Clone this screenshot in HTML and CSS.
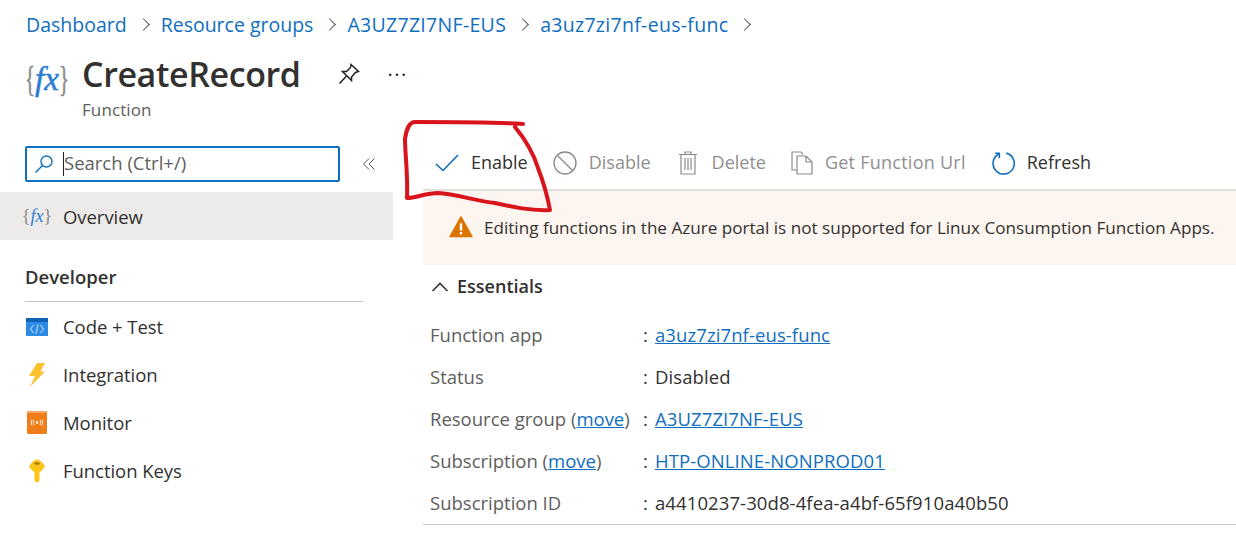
FILE: index.html
```html
<!DOCTYPE html>
<html lang="en">
<head>
  <meta charset="UTF-8" />
  <title>CreateRecord - Function</title>
  <link rel="stylesheet" href="styles.css">
</head>
<body>
  <nav class="crumbs">
    <a>Dashboard</a><span class="chev"></span>
    <a>Resource groups</a><span class="chev"></span>
    <a class="crumb-id">A3UZ7ZI7NF-EUS</a><span class="chev"></span>
    <a class="crumb-id">a3uz7zi7nf-eus-func</a><span class="chev"></span>
  </nav>

  <header class="head">
    <div class="fx fx-big"><span class="brace">{</span><span class="fx-text">fx</span><span class="brace">}</span></div>
    <div class="head-text">
      <div class="head-row">
        <h1>CreateRecord</h1>
        <svg class="pin" width="24" height="24" viewBox="0 0 24 24" fill="none" stroke="#222" stroke-width="1.5">
          <path d="M14 2.5 21.5 9.5 18.5 10.5 14.5 15 14.5 18.5 5.5 9.5 9.5 9.5 13.5 5.5Z"/>
          <path d="M9.5 14 2.5 21.5"/>
        </svg>
        <span class="dots">···</span>
      </div>
      <div class="subtitle">Function</div>
    </div>
  </header>

  <div class="columns">
    <aside class="side">
      <div class="search-row">
        <div class="search">
          <svg width="20" height="20" viewBox="0 0 20 20" fill="none" stroke="#106ebe" stroke-width="1.4">
            <circle cx="12.5" cy="7.5" r="5.5"/><path d="M8.5 11.5 1.5 18.5"/>
          </svg>
          <span class="caret"></span>
          <span class="placeholder">Search (Ctrl+/)</span>
        </div>
        <svg class="collapse" width="14" height="14" viewBox="0 0 14 14" fill="none" stroke="#555" stroke-width="1">
          <path d="M7 1.5 1.5 7 7 12.5M12.5 1.5 7 7 12.5 12.5"/>
        </svg>
      </div>

      <div class="menu-item active">
        <div class="fx fx-small"><span class="brace">{</span><span class="fx-text">fx</span><span class="brace">}</span></div>
        <span>Overview</span>
      </div>

      <div class="section">Developer</div>

      <div class="menu-item">
        <svg width="24" height="24" viewBox="0 0 24 24">
          <rect x="1" y="3" width="22" height="18" fill="#2f8ae6"/>
          <rect x="1" y="3" width="22" height="4" fill="#0f62b5"/>
          <path d="M8.500 10 5.500 14 8.500 18M15.500 10 18.500 14 15.500 18M13 9.500 11 18.500" fill="none" stroke="#d6eafc" stroke-width="1"/>
        </svg>
        <span>Code + Test</span>
      </div>
      <div class="menu-item">
        <svg width="24" height="24" viewBox="0 0 24 24">
          <path d="M12 0H20L15.500 8.500H20L5 24 10 13H4Z" fill="#fbc02d"/>
        </svg>
        <span>Integration</span>
      </div>
      <div class="menu-item">
        <svg width="24" height="24" viewBox="0 0 24 24">
          <rect x="2" y="0" width="20" height="23" rx="1.500" fill="#ef7d1a"/>
          <rect x="2" y="0" width="20" height="2" fill="#f6a766"/>
          <circle cx="12" cy="11.500" r="1.200" fill="#fff"/>
          <path d="M9 9Q7.500 11.500 9 14M15 9Q16.500 11.500 15 14M7 8.500Q5.500 11.500 7 14.500M17 8.500Q18.500 11.500 17 14.500" fill="none" stroke="#fff" stroke-width=".9"/>
        </svg>
        <span>Monitor</span>
      </div>
      <div class="menu-item">
        <svg width="24" height="24" viewBox="0 0 24 24">
          <path d="M12 0 17 3 20 7.500 17 11.500 14.500 13V21.500L12 24 9.500 21.500V13L7 11.500 4 7.500 7 3Z" fill="#fcc419"/>
          <ellipse cx="12" cy="4.500" rx="3" ry="1.300" fill="#a67c08"/>
        </svg>
        <span>Function Keys</span>
      </div>
    </aside>

    <main class="content">
      <div class="toolbar">
        <div class="tool">
          <svg width="24" height="24" viewBox="0 0 24 24" fill="none" stroke="#106ebe" stroke-width="1.600"><path d="M1 13 8 19.500 23 4"/></svg>
          <span>Enable</span>
        </div>
        <div class="tool off">
          <svg width="24" height="24" viewBox="0 0 24 24" fill="none" stroke="#8a8a8a" stroke-width="1.300"><circle cx="12" cy="12" r="11"/><path d="M4.500 4.500 19.500 19.500"/></svg>
          <span>Disable</span>
        </div>
        <div class="tool off">
          <svg width="24" height="24" viewBox="-2 0 24 24" fill="none" stroke="#8a8a8a" stroke-width="1.200"><path d="M1 3.500H19M7 3.500V1H13V3.500M3 3.500V23H17V3.500M7 7V19M10 7V19M13 7V19"/></svg>
          <span>Delete</span>
        </div>
        <div class="tool off tool-url">
          <svg width="22" height="24" viewBox="0 0 22 24" fill="none" stroke="#8a8a8a" stroke-width="1.200"><path d="M6 19H1V1H10L12 3.500M6 5H15L21 11V23H6ZM15 5V11H21"/></svg>
          <span>Get Function Url</span>
        </div>
        <div class="tool">
          <svg width="24" height="24" viewBox="0 0 26 26" fill="none" stroke="#106ebe" stroke-width="1.700"><path d="M8.500 3.200A11.500 11.500 0 1 0 16.500 2.300"/><path d="M4.500 2.500H9V7.500"/></svg>
          <span>Refresh</span>
        </div>
      </div>

      <div class="banner">
        <svg width="24" height="22" viewBox="0 0 26 24">
          <path d="M13 1 25 22.500H1Z" fill="#db7500" stroke="#db7500" stroke-width="1.500" stroke-linejoin="round"/>
          <rect x="11.700" y="8" width="2.600" height="8" fill="#fff"/>
          <rect x="11.700" y="17.500" width="2.600" height="2.600" fill="#fff"/>
        </svg>
        <span>Editing functions in the Azure portal is not supported for Linux Consumption Function Apps.</span>
      </div>

      <div class="essentials">
        <svg width="18" height="12" viewBox="0 0 18 12" fill="none" stroke="#333" stroke-width="1.600"><path d="M1.500 10 9 2.500 16.500 10"/></svg>
        <span>Essentials</span>
      </div>

      <dl class="props">
        <div class="prop"><dt>Function app</dt><dd><a class="link">a3uz7zi7nf-eus-func</a></dd></div>
        <div class="prop"><dt>Status</dt><dd>Disabled</dd></div>
        <div class="prop"><dt>Resource group (<a class="link">move</a>)</dt><dd><a class="link">A3UZ7ZI7NF-EUS</a></dd></div>
        <div class="prop"><dt>Subscription (<a class="link">move</a>)</dt><dd><a class="link">HTP-ONLINE-NONPROD01</a></dd></div>
        <div class="prop"><dt>Subscription ID</dt><dd>a4410237-30d8-4fea-a4bf-65f910a40b50</dd></div>
      </dl>
    </main>
  </div>

  <!-- red marker scribble drawn over the page -->
  <svg class="scribble" width="160" height="105" viewBox="0 0 160 105" fill="none" stroke="#d9141c" stroke-width="4" stroke-linecap="round" stroke-linejoin="round">
    <path d="M122 5C90 3 40 3 14 3 8 3 5 12 4 20 4 35 7 55 6 79 15 79 25 74 37 74 55 75 75 82 94 84 112 88 130 92 149 91 146 75 142 62 137 49 132 33 124 20 114 8"/>
  </svg>
</body>
</html>
```

FILE: styles.css
```css
body {
  font-family: "Open Sans", "Noto Sans", sans-serif;
  font-size: 18.5px;
  color: #323130;
  background: #fff;
  margin: 0;
  width: 1236px;
  height: 538px;
  overflow: hidden;
  position: relative;
}

a {
  color: #106ebe;
}

.crumbs {
  display: flex;
  align-items: center;
  height: 24px;
  padding: 12px 0 1px 26px;
  font-size: 19.5px;
}

.crumb-id {
  letter-spacing: 0.3px;
}

.chev {
  width: 8px;
  height: 8px;
  margin: 0 13px 0 12px;
  border-top: 1.5px solid #555;
  border-right: 1.5px solid #555;
  transform: rotate(45deg);
}

.head {
  display: flex;
  gap: 15px;
  padding: 17px 0 0 25px;
  height: 84px;
}

.fx {
  display: flex;
  align-items: center;
  font-family: "Liberation Serif", serif;
}

.brace {
  color: #8a8886;
  font-weight: normal;
}

.fx-text {
  color: #2b7cd3;
  font-style: italic;
}

.fx-big {
  width: 42px;
  font-size: 36px;
  height: 46px;
  margin-top: 2px;
}

.fx-big .brace {
  display: inline-block;
  width: 10px;
  transform: scaleX(.58);
  transform-origin: left center;
  -webkit-text-stroke: 0.5px #8a8886;
}

.fx-big .fx-text {
  font-size: 33px;
  -webkit-text-stroke: 0.5px #2b7cd3;
}

.fx-small {
  font-size: 18px;
  width: 24px;
  justify-content: center;
}

.head-row {
  display: flex;
  align-items: center;
}

h1 {
  margin: 0;
  font-size: 34px;
  line-height: 40px;
  font-weight: 600;
  letter-spacing: -0.4px;
}

.pin {
  margin-left: 36px;
}

.dots {
  margin-left: 27px;
  font-size: 20px;
  color: #222;
  letter-spacing: 1.5px;
}

.subtitle {
  margin-top: 4px;
  font-size: 17px;
  color: #605e5c;
  letter-spacing: 0.1px;
}

.columns {
  display: flex;
}

.side {
  width: 393px;
  margin-right: 30px;
  flex: none;
  padding-top: 8px;
}

.search-row {
  display: flex;
  align-items: center;
  padding-left: 25px;
  margin-bottom: 10px;
}

.search {
  box-sizing: border-box;
  width: 315px;
  height: 36px;
  border: 2px solid #106ebe;
  border-radius: 2px;
  display: flex;
  align-items: center;
  padding-left: 7px;
}

.caret {
  width: 1px;
  height: 24px;
  background: #222;
  margin-left: 9px;
}

.placeholder {
  color: #605e5c;
  margin-top: -3px;
}

.collapse {
  margin-left: 22px;
}

.menu-item {
  display: flex;
  align-items: center;
  gap: 14px;
  height: 48px;
  padding-left: 25px;
}

.menu-item > span {
  margin-top: -2px;
  letter-spacing: -0.05px;
}

.menu-item.active > span {
  margin-top: 0;
}

.menu-item.active {
  background: #edebe9;
  margin-bottom: 14px;
}

.section {
  width: 338px;
  margin-left: 25px;
  height: 48px;
  box-sizing: border-box;
  padding-top: 10px;
  border-bottom: 1px solid #c8c6c4;
  font-weight: 600;
  margin-bottom: 1px;
}

.content {
  flex: 1;
  margin-top: -1px;
}

.toolbar {
  display: flex;
  align-items: center;
  height: 52px;
  padding-left: 12px;
  border-bottom: 2px solid #e1dfdd;
  font-size: 18px;
}

.tool {
  display: flex;
  align-items: center;
  gap: 12px;
  margin-right: 25px;
}

.tool span {
  margin-top: -2px;
}

.tool.off {
  color: #8f8f8f;
}

.tool-url span {
  letter-spacing: 0.25px;
}

.banner {
  display: flex;
  align-items: center;
  gap: 11px;
  height: 74px;
  box-sizing: border-box;
  padding-left: 26px;
  background: #fdf5ef;
  font-size: 17.1px;
  white-space: nowrap;
}

.banner span {
  margin-top: -1px;
}

.banner svg {
  margin-top: -3px;
}

.essentials {
  display: flex;
  align-items: center;
  gap: 8px;
  height: 44px;
  padding-left: 8px;
  font-size: 18px;
  font-weight: 600;
}

.essentials span {
  margin-top: -2px;
}

.props {
  margin: 5px 0 0;
  width: 813px;
  border-bottom: 1px solid #c8c6c4;
}

.prop {
  display: flex;
  align-items: center;
  box-sizing: border-box;
  height: 42px;
  padding: 0 0 2px 7px;
}

dt {
  width: 213px;
  color: #605e5c;
}

dd {
  margin: 0;
  color: #323130;
  letter-spacing: 0.1px;
}

dd::before {
  content: ":";
  margin-right: 7px;
  color: #323130;
}

.link {
  color: #106ebe;
  text-decoration: underline;
}

.scribble {
  position: absolute;
  left: 401px;
  top: 119px;
}
```
